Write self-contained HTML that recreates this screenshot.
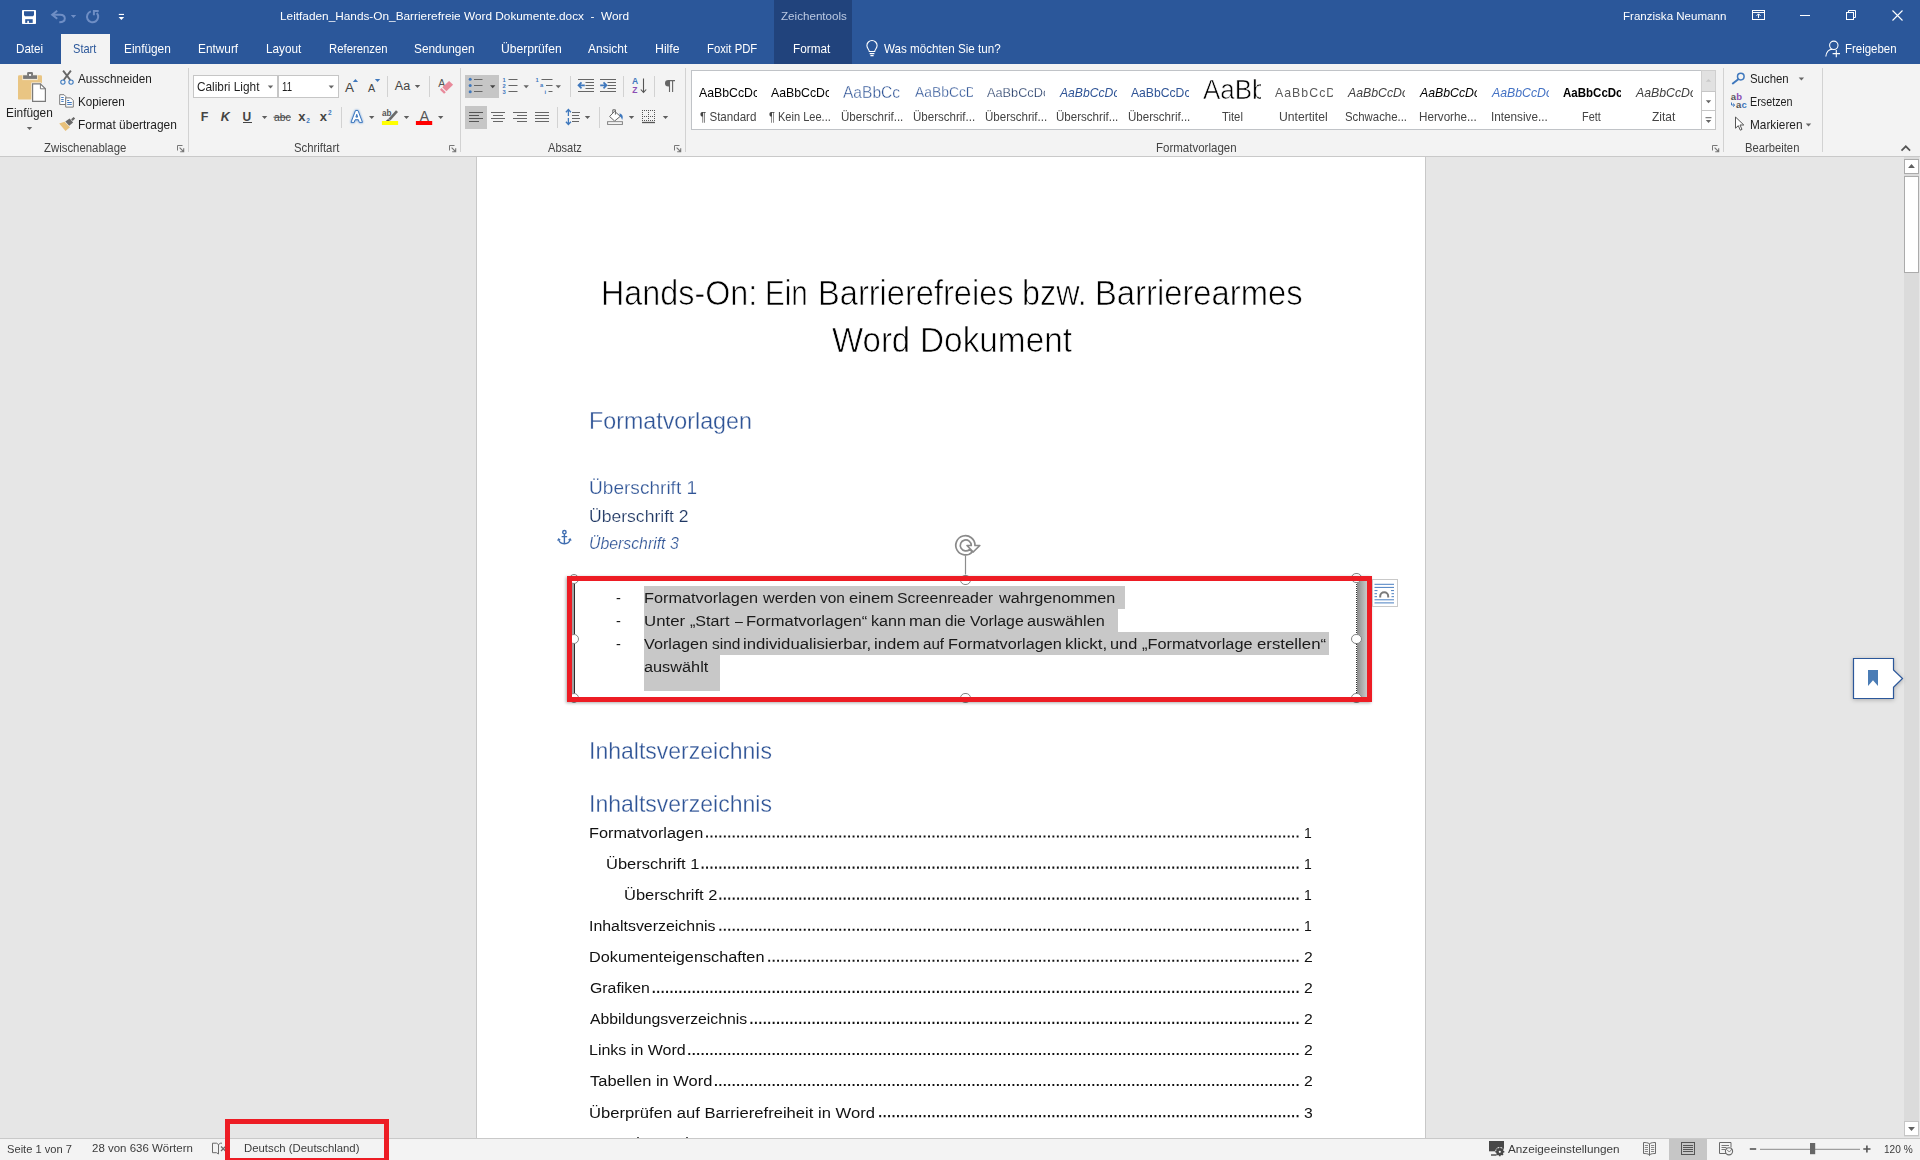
<!DOCTYPE html>
<html lang="de"><head><meta charset="utf-8"><title>Word</title>
<style>
html,body{margin:0;padding:0}
body{width:1920px;height:1160px;overflow:hidden;position:relative;background:#e6e6e6;font-family:"Liberation Sans",sans-serif}
.abs,.t,.clip,.b{position:absolute}
.t{white-space:pre;line-height:1;transform-origin:0 0;font-family:"Liberation Sans",sans-serif}
.clip{overflow:hidden}
.b{box-sizing:border-box}
.sep{position:absolute;width:1px;background:#d2d2d2}
.hl{position:absolute;background:#c6c6c6}
.sel{position:absolute;background:#c8c8c8}
.hd{position:absolute;width:10.400px;height:10.400px;border-radius:50%;background:#fff;border:1.800px solid #858585;box-sizing:border-box}
</style></head><body>
<!-- ===== document area ===== -->
<div class="b" style="left:476px;top:157px;width:950px;height:981px;background:#fff;border-left:1px solid #c8c8c8;border-right:1px solid #c8c8c8"></div>
<!-- selection highlight -->
<div class="sel" style="left:644px;top:586px;width:481px;height:23px"></div>
<div class="sel" style="left:644px;top:609px;width:474px;height:23px"></div>
<div class="sel" style="left:644px;top:632px;width:685px;height:23px"></div>
<div class="sel" style="left:644px;top:655px;width:76px;height:36px"></div>
<div class="abs" style="left:637px;top:1137px;width:2px;height:1px;background:#555"></div><div class="abs" style="left:686px;top:1137px;width:2px;height:1px;background:#555"></div>
<!-- textbox frame -->
<div class="abs" style="left:572px;top:579px;width:2px;height:120px;background:#a2a2a2"></div><div class="abs" style="left:574px;top:579px;width:1px;height:120px;background:#2a2a2a"></div>
<div class="abs" style="left:1357px;top:581px;width:10px;height:117px;background:linear-gradient(to right,#8c8c8c,#a9a9a9 45%,#c9c9c9)"></div>
<div class="abs" style="left:1356px;top:579px;width:0;height:120px;border-left:1px dotted #333"></div>
<svg class="abs" style="left:0;top:0" width="1920" height="1160"><g stroke="#111" stroke-width="2.1" stroke-dasharray="1.9 2.54"><line x1="706.08" y1="836.55" x2="1298.50" y2="836.55"/><line x1="701.64" y1="867.61" x2="1298.50" y2="867.61"/><line x1="719.40" y1="898.67" x2="1298.50" y2="898.67"/><line x1="719.40" y1="929.73" x2="1298.50" y2="929.73"/><line x1="768.24" y1="960.79" x2="1298.50" y2="960.79"/><line x1="652.80" y1="991.85" x2="1298.50" y2="991.85"/><line x1="750.48" y1="1022.91" x2="1298.50" y2="1022.91"/><line x1="688.32" y1="1053.97" x2="1298.50" y2="1053.97"/><line x1="714.96" y1="1085.03" x2="1298.50" y2="1085.03"/><line x1="879.24" y1="1116.09" x2="1298.50" y2="1116.09"/></g></svg>
<!-- ===== scrollbar ===== -->
<div class="abs" style="left:1904px;top:157px;width:15px;height:980px;background:#dbdbdb"></div>
<div class="b" style="left:1904px;top:159px;width:15px;height:15px;background:#fff;border:1px solid #ababab"></div>
<div class="b" style="left:1904px;top:176px;width:15px;height:97px;background:#fff;border:1px solid #ababab"></div>
<div class="b" style="left:1904px;top:1121px;width:15px;height:15px;background:#fff;border:1px solid #c6c6c6"></div>
<svg class="abs" style="left:1904px;top:157px" width="16" height="981"><path d="M4.100 11 L7.500 7 L10.900 11Z M4.100 970 L7.500 974 L10.900 970Z" fill="#606060"/></svg>
<!-- ===== title bar ===== -->
<div class="abs" style="left:0;top:0;width:1920px;height:64px;background:#2b579a"></div>
<div class="abs" style="left:774px;top:0;width:78px;height:64px;background:#21437c"></div>
<div class="abs" style="left:61px;top:34px;width:49px;height:30px;background:#f3f3f3"></div>
<!-- ===== ribbon ===== -->
<div class="abs" style="left:0;top:64px;width:1920px;height:92px;background:#f3f3f3"></div>
<div class="abs" style="left:0;top:156px;width:1920px;height:1px;background:#c9c9c9"></div>
<!-- ===== status bar ===== -->
<div class="abs" style="left:0;top:1138px;width:1920px;height:1px;background:#c9c9c9"></div>
<div class="abs" style="left:0;top:1139px;width:1920px;height:21px;background:#f3f3f3"></div>
<div class="abs" style="left:1669px;top:1139px;width:38px;height:21px;background:#c6c6c6"></div>
<!-- ribbon shapes -->
<div class="sep" style="left:188px;top:68px;height:84px"></div>
<div class="sep" style="left:460px;top:68px;height:84px"></div>
<div class="sep" style="left:685px;top:68px;height:84px"></div>
<div class="sep" style="left:1723px;top:68px;height:84px"></div>
<div class="sep" style="left:1822px;top:68px;height:84px"></div>
<div class="sep" style="left:387px;top:76px;height:21px"></div>
<div class="sep" style="left:429px;top:76px;height:21px"></div>
<div class="sep" style="left:341px;top:107px;height:21px"></div>
<div class="sep" style="left:570px;top:76px;height:21px"></div>
<div class="sep" style="left:623px;top:76px;height:21px"></div>
<div class="sep" style="left:654px;top:76px;height:21px"></div>
<div class="sep" style="left:557px;top:107px;height:21px"></div>
<div class="sep" style="left:599px;top:107px;height:21px"></div>
<div class="b" style="left:193px;top:75px;width:85px;height:23px;background:#fff;border:1px solid #c6c6c6"></div>
<div class="b" style="left:278px;top:75px;width:61px;height:23px;background:#fff;border:1px solid #c6c6c6"></div>
<div class="hl" style="left:465px;top:75px;width:34px;height:23px"></div>
<div class="hl" style="left:465px;top:106px;width:22px;height:23px"></div>
<div class="b" style="left:691px;top:70px;width:1011px;height:60px;background:#fff;border:1px solid #c0c3c7"></div>
<div class="b" style="left:1701px;top:70px;width:15px;height:22px;background:#e1e1e1;border:1px solid #cfcfcf"></div>
<div class="b" style="left:1701px;top:91px;width:15px;height:20px;background:#fff;border:1px solid #c6c6c6"></div>
<div class="b" style="left:1701px;top:110px;width:15px;height:20px;background:#fff;border:1px solid #c6c6c6"></div>

<span class="t" style="left:279.50px;top:11.00px;font-size:11.80px;color:#ffffff;transform:scaleX(1.0019);">Leitfaden_Hands-On_Barrierefreie Word Dokumente.docx  -  Word</span>
<span class="t" style="left:780.80px;top:11.00px;font-size:11.80px;color:#bccae3;transform:scaleX(0.9852);">Zeichentools</span>
<span class="t" style="left:1622.50px;top:11.00px;font-size:11.80px;color:#ffffff;transform:scaleX(0.9790);">Franziska Neumann</span>
<span class="t" style="left:16.30px;top:44.00px;font-size:11.90px;color:#ffffff;transform:scaleX(0.9773);">Datei</span>
<span class="t" style="left:73.00px;top:44.00px;font-size:11.90px;color:#2b579a;transform:scaleX(0.9300);">Start</span>
<span class="t" style="left:124.40px;top:44.00px;font-size:11.90px;color:#ffffff;transform:scaleX(0.9972);">Einfügen</span>
<span class="t" style="left:198.20px;top:44.00px;font-size:11.90px;color:#ffffff;transform:scaleX(0.9949);">Entwurf</span>
<span class="t" style="left:266.00px;top:44.00px;font-size:11.90px;color:#ffffff;transform:scaleX(0.9891);">Layout</span>
<span class="t" style="left:329.00px;top:44.00px;font-size:11.90px;color:#ffffff;transform:scaleX(0.9530);">Referenzen</span>
<span class="t" style="left:414.00px;top:44.00px;font-size:11.90px;color:#ffffff;transform:scaleX(0.9963);">Sendungen</span>
<span class="t" style="left:501.00px;top:44.00px;font-size:11.90px;color:#ffffff;transform:scaleX(1.0191);">Überprüfen</span>
<span class="t" style="left:588.00px;top:44.00px;font-size:11.90px;color:#ffffff;transform:scaleX(1.0078);">Ansicht</span>
<span class="t" style="left:655.00px;top:44.00px;font-size:11.90px;color:#ffffff;transform:scaleX(1.0342);">Hilfe</span>
<span class="t" style="left:707.00px;top:44.00px;font-size:11.90px;color:#ffffff;transform:scaleX(0.9508);">Foxit PDF</span>
<span class="t" style="left:793.00px;top:44.00px;font-size:11.90px;color:#ffffff;transform:scaleX(0.9908);">Format</span>
<span class="t" style="left:884.00px;top:44.00px;font-size:11.90px;color:#ffffff;transform:scaleX(0.9785);">Was möchten Sie tun?</span>
<span class="t" style="left:1844.50px;top:44.00px;font-size:11.90px;color:#ffffff;transform:scaleX(0.9635);">Freigeben</span>
<span class="t" style="left:6.20px;top:108.00px;font-size:11.90px;color:#1e1e1e;transform:scaleX(0.9972);">Einfügen</span>
<span class="t" style="left:78.30px;top:74.00px;font-size:11.90px;color:#1e1e1e;transform:scaleX(0.9867);">Ausschneiden</span>
<span class="t" style="left:78.30px;top:97.00px;font-size:11.90px;color:#1e1e1e;transform:scaleX(0.9833);">Kopieren</span>
<span class="t" style="left:78.30px;top:120.00px;font-size:11.90px;color:#1e1e1e;transform:scaleX(1.0035);">Format übertragen</span>
<span class="t" style="left:43.90px;top:143.00px;font-size:11.90px;color:#444444;transform:scaleX(0.9581);">Zwischenablage</span>
<span class="t" style="left:293.60px;top:143.00px;font-size:11.90px;color:#444444;transform:scaleX(0.9530);">Schriftart</span>
<span class="t" style="left:548.30px;top:143.00px;font-size:11.90px;color:#444444;transform:scaleX(0.9312);">Absatz</span>
<span class="t" style="left:1156.40px;top:143.00px;font-size:11.90px;color:#444444;transform:scaleX(0.9679);">Formatvorlagen</span>
<span class="t" style="left:1744.80px;top:143.00px;font-size:11.90px;color:#444444;transform:scaleX(0.9455);">Bearbeiten</span>
<span class="t" style="left:196.70px;top:82.00px;font-size:11.90px;color:#1e1e1e;transform:scaleX(0.9940);">Calibri Light</span>
<span class="t" style="left:281.90px;top:82.00px;font-size:11.90px;color:#1e1e1e;transform:scaleX(0.8091);">11</span>
<span class="t" style="left:1750.40px;top:74.00px;font-size:11.90px;color:#1e1e1e;transform:scaleX(0.9593);">Suchen</span>
<span class="t" style="left:1750.40px;top:97.00px;font-size:11.90px;color:#1e1e1e;transform:scaleX(0.9069);">Ersetzen</span>
<span class="t" style="left:1750.40px;top:120.00px;font-size:11.90px;color:#1e1e1e;transform:scaleX(0.9933);">Markieren</span>
<span class="t" style="left:7.30px;top:1143.00px;font-size:11.60px;color:#3c3c3c;transform:scaleX(0.9609);">Seite 1 von 7</span>
<span class="t" style="left:92.30px;top:1142.00px;font-size:11.60px;color:#3c3c3c;transform:scaleX(0.9904);">28 von 636 Wörtern</span>
<span class="t" style="left:244.20px;top:1142.00px;font-size:11.60px;color:#3c3c3c;transform:scaleX(0.9791);">Deutsch (Deutschland)</span>
<span class="t" style="left:1507.50px;top:1143.00px;font-size:11.60px;color:#3c3c3c;transform:scaleX(1.0120);">Anzeigeeinstellungen</span>
<span class="t" style="left:1883.50px;top:1143.00px;font-size:11.60px;color:#3c3c3c;transform:scaleX(0.8721);">120 %</span>
<span class="t" style="left:700.00px;top:112.00px;font-size:11.90px;color:#444444;transform:scaleX(0.9732);">¶ Standard</span>
<span class="t" style="left:769.10px;top:112.00px;font-size:11.90px;color:#444444;transform:scaleX(0.9285);">¶ Kein Lee...</span>
<span class="t" style="left:840.50px;top:112.00px;font-size:11.90px;color:#444444;transform:scaleX(0.9720);">Überschrif...</span>
<span class="t" style="left:912.60px;top:112.00px;font-size:11.90px;color:#444444;transform:scaleX(0.9704);">Überschrif...</span>
<span class="t" style="left:984.60px;top:112.00px;font-size:11.90px;color:#444444;transform:scaleX(0.9704);">Überschrif...</span>
<span class="t" style="left:1056.30px;top:112.00px;font-size:11.90px;color:#444444;transform:scaleX(0.9720);">Überschrif...</span>
<span class="t" style="left:1128.40px;top:112.00px;font-size:11.90px;color:#444444;transform:scaleX(0.9720);">Überschrif...</span>
<span class="t" style="left:1221.90px;top:112.00px;font-size:11.90px;color:#444444;transform:scaleX(0.9495);">Titel</span>
<span class="t" style="left:1279.00px;top:112.00px;font-size:11.90px;color:#444444;transform:scaleX(1.0226);">Untertitel</span>
<span class="t" style="left:1345.00px;top:112.00px;font-size:11.90px;color:#444444;transform:scaleX(0.9571);">Schwache...</span>
<span class="t" style="left:1419.30px;top:112.00px;font-size:11.90px;color:#444444;transform:scaleX(0.9810);">Hervorhe...</span>
<span class="t" style="left:1491.31px;top:112.00px;font-size:11.90px;color:#444444;transform:scaleX(0.9858);">Intensive...</span>
<span class="t" style="left:1582.30px;top:112.00px;font-size:11.90px;color:#444444;transform:scaleX(0.9160);">Fett</span>
<span class="t" style="left:1651.70px;top:112.00px;font-size:11.90px;color:#444444;transform:scaleX(1.0075);">Zitat</span>
<div class="clip" style="left:698.00px;width:59.30px;top:83.00px;height:24.84px"><span class="t" style="left:0.80px;top:4px;font-size:12.95px;color:#000;transform:scaleX(0.9500);">AaBbCcDc</span></div>
<div class="clip" style="left:770.00px;width:59.30px;top:83.00px;height:24.84px"><span class="t" style="left:0.80px;top:4px;font-size:12.95px;color:#000;transform:scaleX(0.9500);">AaBbCcDc</span></div>
<div class="clip" style="left:842.00px;width:59.30px;top:80.00px;height:30.48px"><span class="t" style="left:0.80px;top:4px;font-size:17.29px;color:#2f5496;transform:scaleX(0.9000);-webkit-text-stroke:0.35px #fff;">AaBbCcDc</span></div>
<div class="clip" style="left:914.00px;width:59.30px;top:80.00px;height:27.78px"><span class="t" style="left:0.80px;top:4px;font-size:15.22px;color:#2f5496;transform:scaleX(0.9100);-webkit-text-stroke:0.3px #fff;">AaBbCcDc</span></div>
<div class="clip" style="left:986.00px;width:59.30px;top:82.00px;height:25.61px"><span class="t" style="left:0.80px;top:4px;font-size:13.55px;color:#1f3763;transform:scaleX(0.9400);-webkit-text-stroke:0.25px #fff;">AaBbCcDc</span></div>
<div class="clip" style="left:1058.00px;width:59.30px;top:83.00px;height:24.84px"><span class="t" style="left:1.74px;top:4px;font-size:12.95px;color:#2f5496;transform:scaleX(0.9400);font-style:italic;">AaBbCcDc</span></div>
<div class="clip" style="left:1130.00px;width:59.30px;top:83.00px;height:24.84px"><span class="t" style="left:0.80px;top:4px;font-size:12.95px;color:#2f5496;transform:scaleX(0.9400);">AaBbCcDc</span></div>
<div class="clip" style="left:1202.00px;width:59.30px;top:72.00px;height:43.54px"><span class="t" style="left:0.80px;top:4px;font-size:27.34px;color:#000;transform:scaleX(0.9500);-webkit-text-stroke:0.6px #fff;">AaBbCc</span></div>
<div class="clip" style="left:1274.00px;width:59.30px;top:83.00px;height:24.84px"><span class="t" style="left:0.80px;top:4px;font-size:12.95px;color:#5a5a5a;transform:scaleX(0.9500);letter-spacing:1.1px;">AaBbCcDd</span></div>
<div class="clip" style="left:1346.00px;width:59.30px;top:83.00px;height:24.84px"><span class="t" style="left:1.75px;top:4px;font-size:12.95px;color:#404040;transform:scaleX(0.9500);font-style:italic;">AaBbCcDc</span></div>
<div class="clip" style="left:1418.00px;width:59.30px;top:83.00px;height:24.84px"><span class="t" style="left:1.75px;top:4px;font-size:12.95px;color:#000;transform:scaleX(0.9500);font-style:italic;">AaBbCcDc</span></div>
<div class="clip" style="left:1490.00px;width:59.30px;top:83.00px;height:24.84px"><span class="t" style="left:1.75px;top:4px;font-size:12.95px;color:#4472c4;transform:scaleX(0.9500);font-style:italic;">AaBbCcDc</span></div>
<div class="clip" style="left:1562.00px;width:59.30px;top:83.00px;height:24.84px"><span class="t" style="left:0.80px;top:4px;font-size:12.95px;color:#000;transform:scaleX(0.8900);font-weight:bold;">AaBbCcDc</span></div>
<div class="clip" style="left:1634.00px;width:59.30px;top:83.00px;height:24.84px"><span class="t" style="left:1.75px;top:4px;font-size:12.95px;color:#404040;transform:scaleX(0.9500);font-style:italic;">AaBbCcDc</span></div>
<span class="t" style="left:589.29px;top:410.00px;font-size:23.02px;color:#2f5496;transform:scaleX(1.0108);-webkit-text-stroke:0.3px #fff;">Formatvorlagen</span>
<span class="t" style="left:589.28px;top:479.00px;font-size:18.72px;color:#2f5496;transform:scaleX(1.0199);-webkit-text-stroke:0.25px #fff;">Überschrift 1</span>
<span class="t" style="left:589.28px;top:508.00px;font-size:17.23px;color:#1f3763;transform:scaleX(1.0205);-webkit-text-stroke:0.2px #fff;">Überschrift 2</span>
<span class="t" style="left:589.30px;top:536.00px;font-size:15.82px;color:#2f5496;transform:scaleX(1.0007);font-style:italic;-webkit-text-stroke:0.2px #fff;">Überschrift 3</span>
<span class="t" style="left:600.65px;top:276.00px;font-size:34.88px;color:#000;transform:scaleX(0.9265);-webkit-text-stroke:0.7px #fff;">Hands-On:</span>
<span class="t" style="left:764.90px;top:276.00px;font-size:34.88px;color:#000;transform:scaleX(0.8488);-webkit-text-stroke:0.7px #fff;">Ein</span>
<span class="t" style="left:817.53px;top:276.00px;font-size:34.88px;color:#000;transform:scaleX(0.9348);-webkit-text-stroke:0.7px #fff;">Barrierefreies</span>
<span class="t" style="left:1022.24px;top:276.00px;font-size:34.88px;color:#000;transform:scaleX(0.9279);-webkit-text-stroke:0.7px #fff;">bzw.</span>
<span class="t" style="left:1095.02px;top:276.00px;font-size:34.88px;color:#000;transform:scaleX(0.9396);-webkit-text-stroke:0.7px #fff;">Barrierearmes</span>
<span class="t" style="left:831.60px;top:323.00px;font-size:34.88px;color:#000;transform:scaleX(0.9459);-webkit-text-stroke:0.7px #fff;">Word</span>
<span class="t" style="left:920.29px;top:323.00px;font-size:34.88px;color:#000;transform:scaleX(0.9564);-webkit-text-stroke:0.7px #fff;">Dokument</span>
<span class="t" style="left:643.85px;top:590.00px;font-size:15.54px;color:#1a1a1a;transform:scaleX(1.0483);">Formatvorlagen</span>
<span class="t" style="left:762.84px;top:590.00px;font-size:15.54px;color:#1a1a1a;transform:scaleX(1.0448);">werden</span>
<span class="t" style="left:819.50px;top:590.00px;font-size:15.54px;color:#1a1a1a;transform:scaleX(0.9958);">von</span>
<span class="t" style="left:848.70px;top:590.00px;font-size:15.54px;color:#1a1a1a;transform:scaleX(1.0589);">einem</span>
<span class="t" style="left:897.40px;top:590.00px;font-size:15.54px;color:#1a1a1a;transform:scaleX(1.0199);">Screenreader</span>
<span class="t" style="left:998.84px;top:590.00px;font-size:15.54px;color:#1a1a1a;transform:scaleX(1.0436);">wahrgenommen</span>
<span class="t" style="left:643.82px;top:613.00px;font-size:15.54px;color:#1a1a1a;transform:scaleX(1.0813);">Unter</span>
<span class="t" style="left:690.10px;top:613.00px;font-size:15.54px;color:#1a1a1a;transform:scaleX(1.0374);">„Start</span>
<span class="t" style="left:734.80px;top:613.00px;font-size:15.54px;color:#1a1a1a;transform:scaleX(0.9111);">–</span>
<span class="t" style="left:746.44px;top:613.00px;font-size:15.54px;color:#1a1a1a;transform:scaleX(1.0642);">Formatvorlagen“</span>
<span class="t" style="left:870.86px;top:613.00px;font-size:15.54px;color:#1a1a1a;transform:scaleX(1.0393);">kann</span>
<span class="t" style="left:908.73px;top:613.00px;font-size:15.54px;color:#1a1a1a;transform:scaleX(1.0709);">man</span>
<span class="t" style="left:945.30px;top:613.00px;font-size:15.54px;color:#1a1a1a;transform:scaleX(1.0006);">die</span>
<span class="t" style="left:969.60px;top:613.00px;font-size:15.54px;color:#1a1a1a;transform:scaleX(1.0204);">Vorlage</span>
<span class="t" style="left:1027.30px;top:613.00px;font-size:15.54px;color:#1a1a1a;transform:scaleX(1.0473);">auswählen</span>
<span class="t" style="left:644.00px;top:636.00px;font-size:15.54px;color:#1a1a1a;transform:scaleX(1.0449);">Vorlagen</span>
<span class="t" style="left:711.60px;top:636.00px;font-size:15.54px;color:#1a1a1a;transform:scaleX(0.9945);">sind</span>
<span class="t" style="left:743.22px;top:636.00px;font-size:15.54px;color:#1a1a1a;transform:scaleX(1.0760);">individualisierbar,</span>
<span class="t" style="left:873.72px;top:636.00px;font-size:15.54px;color:#1a1a1a;transform:scaleX(1.0777);">indem</span>
<span class="t" style="left:923.10px;top:636.00px;font-size:15.54px;color:#1a1a1a;transform:scaleX(0.9742);">auf</span>
<span class="t" style="left:947.95px;top:636.00px;font-size:15.54px;color:#1a1a1a;transform:scaleX(1.0474);">Formatvorlagen</span>
<span class="t" style="left:1065.02px;top:636.00px;font-size:15.54px;color:#1a1a1a;transform:scaleX(1.0845);">klickt,</span>
<span class="t" style="left:1109.75px;top:636.00px;font-size:15.54px;color:#1a1a1a;transform:scaleX(1.0504);">und</span>
<span class="t" style="left:1142.10px;top:636.00px;font-size:15.54px;color:#1a1a1a;transform:scaleX(1.0501);">„Formatvorlage</span>
<span class="t" style="left:1256.60px;top:636.00px;font-size:15.54px;color:#1a1a1a;transform:scaleX(1.0816);">erstellen“</span>
<span class="t" style="left:644.30px;top:659.00px;font-size:15.54px;color:#1a1a1a;transform:scaleX(1.0487);">auswählt</span>
<span class="t" style="left:615.50px;top:590.00px;font-size:15.54px;color:#1a1a1a;transform:scaleX(0.9400);">-</span>
<span class="t" style="left:615.50px;top:613.00px;font-size:15.54px;color:#1a1a1a;transform:scaleX(0.9400);">-</span>
<span class="t" style="left:615.50px;top:636.00px;font-size:15.54px;color:#1a1a1a;transform:scaleX(0.9400);">-</span>
<span class="t" style="left:588.80px;top:740.00px;font-size:23.02px;color:#2f5496;transform:scaleX(0.9999);-webkit-text-stroke:0.3px #fff;">Inhaltsverzeichnis</span>
<span class="t" style="left:588.80px;top:793.00px;font-size:23.02px;color:#2f5496;transform:scaleX(0.9999);-webkit-text-stroke:0.3px #fff;">Inhaltsverzeichnis</span>
<span class="t" style="left:588.95px;top:825.00px;font-size:15.54px;color:#111;transform:scaleX(1.0502);">Formatvorlagen</span>
<span class="t" style="left:1304.30px;top:825.00px;font-size:15.54px;color:#111;transform:scaleX(0.9000);">1</span>
<span class="t" style="left:606.44px;top:856.00px;font-size:15.54px;color:#111;transform:scaleX(1.0613);">Überschrift 1</span>
<span class="t" style="left:1304.30px;top:856.00px;font-size:15.54px;color:#111;transform:scaleX(0.9000);">1</span>
<span class="t" style="left:623.94px;top:887.00px;font-size:15.54px;color:#111;transform:scaleX(1.0613);">Überschrift 2</span>
<span class="t" style="left:1304.30px;top:887.00px;font-size:15.54px;color:#111;transform:scaleX(0.9000);">1</span>
<span class="t" style="left:589.28px;top:918.00px;font-size:15.54px;color:#111;transform:scaleX(1.0246);">Inhaltsverzeichnis</span>
<span class="t" style="left:1304.30px;top:918.00px;font-size:15.54px;color:#111;transform:scaleX(0.9000);">1</span>
<span class="t" style="left:589.25px;top:949.00px;font-size:15.54px;color:#111;transform:scaleX(1.0473);">Dokumenteigenschaften</span>
<span class="t" style="left:1304.20px;top:949.00px;font-size:15.54px;color:#111;transform:scaleX(1.0125);">2</span>
<span class="t" style="left:590.30px;top:980.00px;font-size:15.54px;color:#111;transform:scaleX(1.0196);">Grafiken</span>
<span class="t" style="left:1304.20px;top:980.00px;font-size:15.54px;color:#111;transform:scaleX(1.0125);">2</span>
<span class="t" style="left:590.00px;top:1011.00px;font-size:15.54px;color:#111;transform:scaleX(1.0176);">Abbildungsverzeichnis</span>
<span class="t" style="left:1304.20px;top:1011.00px;font-size:15.54px;color:#111;transform:scaleX(1.0125);">2</span>
<span class="t" style="left:589.27px;top:1042.00px;font-size:15.54px;color:#111;transform:scaleX(1.0308);">Links in Word</span>
<span class="t" style="left:1304.20px;top:1042.00px;font-size:15.54px;color:#111;transform:scaleX(1.0125);">2</span>
<span class="t" style="left:589.50px;top:1073.00px;font-size:15.54px;color:#111;transform:scaleX(1.0605);">Tabellen in Word</span>
<span class="t" style="left:1304.20px;top:1073.00px;font-size:15.54px;color:#111;transform:scaleX(1.0125);">2</span>
<span class="t" style="left:589.23px;top:1105.00px;font-size:15.54px;color:#111;transform:scaleX(1.0697);">Überprüfen auf Barrierefreiheit in Word</span>
<span class="t" style="left:1304.20px;top:1105.00px;font-size:15.54px;color:#111;transform:scaleX(1.0125);">3</span>
<svg class="abs" style="left:0;top:0" width="1920" height="160" viewBox="0 0 1920 160">

<!-- QAT -->
<g>
<rect x="22" y="9.900" width="14" height="14.100" rx="0.700" fill="#fff"/>
<path d="M24 11.300h10v3.800l-1 1.200h-8l-1-1.200z" fill="#2b579a"/>
<rect x="25.200" y="19.200" width="7.500" height="3.700" fill="#2b579a"/>
<rect x="27.300" y="20.800" width="1.600" height="2.200" fill="#fff"/>
</g>
<g fill="none" stroke="#6f8ec5" stroke-width="2" stroke-linecap="butt">
<path d="M57.200 10.700 L52.200 14.700 L57.200 18.700"/><path d="M52.800 14.700 H60.200 C63.400 14.700 64.800 16.600 64.800 18.400 C64.800 20.800 62.400 22.100 59.300 22.200"/>
<path d="M93.900 15.300 V11 H98.700"/><path d="M90.800 11.400 A5.600 5.600 0 1 0 96.800 13"/>
</g>
<path d="M70.80 15.10h5.4l-2.7 3z" fill="#6f8ec5"/>
<rect x="118.8" y="13.9" width="5.2" height="1.1" fill="#fff"/><path d="M118.6 17h5.6l-2.8 2.9z" fill="#fff"/>
<!-- window controls -->
<g fill="none" stroke="#fff" stroke-width="1">
<rect x="1752.5" y="10.5" width="12" height="9"/><path d="M1752.5 12.5h12M1758.5 18v-4M1756.5 15.8l2-2 2 2"/>
<path d="M1800 15.5h10"/>
<rect x="1846.5" y="12.5" width="7" height="7"/><path d="M1848.5 12.5v-2h7v7h-2"/>
<path d="M1892.5 10.5l10 10M1902.5 10.5l-10 10" stroke-width="1.1"/>
</g>
<!-- lightbulb -->
<g fill="none" stroke="#fff" stroke-width="1.1"><path d="M869.3 51.5 C869.3 49.5 866.9 48.7 866.9 45.6 A5.1 5.1 0 0 1 877.1 45.6 C877.1 48.7 874.7 49.5 874.7 51.5 Z"/><path d="M869.6 53.6h4.8M870.4 55.6h3.2"/></g>
<!-- share -->
<g fill="none" stroke="#fff" stroke-width="1.1"><circle cx="1833.8" cy="45.3" r="4.2"/><path d="M1825.8 56.5c0.6-4.6 3.4-7 6.6-7.2M1832.600 53.600h7.400M1836.300 49.900v7.400"/></g>
<!-- paste -->
<g>
<rect x="18" y="75.3" width="24" height="24.3" rx="1.2" fill="#e9c583"/>
<rect x="22.300" y="74.600" width="15.400" height="5.500" fill="#f1ead9"/><rect x="23.100" y="75.300" width="13.900" height="3.600" fill="#787878"/><rect x="27.100" y="72" width="5.900" height="4" rx="1.200" fill="#787878"/><rect x="29" y="74" width="2.100" height="1.900" fill="#f3f3f3"/>
<path d="M31.400 82.600h9.600l5.600 5.400v14.500h-15.200z" fill="#f3f3f3"/><path d="M32.600 83.800h7.800l5 5v12.600h-12.800z" fill="#fff" stroke="#7a7a7a" stroke-width="1.200"/><path d="M40.400 83.800v5h5" fill="none" stroke="#7a7a7a" stroke-width="1"/>
</g>
<path d="M26.80 127.00h5.4l-2.7 3z" fill="#666"/>
<!-- scissors -->
<g fill="none"><path d="M63.100 70.600L70.300 80M70.900 70.600L63.700 80" stroke="#666" stroke-width="1.900"/><circle cx="62.900" cy="82.100" r="2.150" stroke="#3f7bbf" stroke-width="1.100"/><circle cx="71.050" cy="82.100" r="2.150" stroke="#3f7bbf" stroke-width="1.100"/></g>
<!-- copy -->
<g fill="#fff" stroke="#7a7a7a" stroke-width="1"><path d="M59.700 94.700h4.300l1.800 1.800v8h-6.100z"/><path d="M65.700 97.900h5l2.600 2.600v6.600h-7.600z"/></g>
<path d="M61.200 97.500h2.500M61.200 99.500h2.500M61.200 101.400h2.500M67.200 102.500h4.600M67.200 104.400h4.600M67.200 100.500h2" stroke="#3f78bd" stroke-width="1" fill="none"/>
<!-- format painter -->
<g><path d="M71.100 119.300l2.500-2.400 1.500 1.600-2.500 2.400z" fill="#666"/><path d="M65.300 121.500l4.300-3 3.500 4-3.900 3.300z" fill="#6a6a6a"/><path d="M59.200 123.400l5.300-1.600 5.500 5.400-4.500 3.700z" fill="#e9c27b"/></g>
<!-- launchers -->
<g transform="translate(177.0 145.0)"><path d="M0.5 5.5V0.5H5.5" fill="none" stroke="#777" stroke-width="1"/><path d="M2.6 2.6L6.5 6.5M6.7 3.2V6.7H3.2" fill="none" stroke="#777" stroke-width="1.1"/></g><g transform="translate(449.0 145.0)"><path d="M0.5 5.5V0.5H5.5" fill="none" stroke="#777" stroke-width="1"/><path d="M2.6 2.6L6.5 6.5M6.7 3.2V6.7H3.2" fill="none" stroke="#777" stroke-width="1.1"/></g><g transform="translate(674.0 145.0)"><path d="M0.5 5.5V0.5H5.5" fill="none" stroke="#777" stroke-width="1"/><path d="M2.6 2.6L6.5 6.5M6.7 3.2V6.7H3.2" fill="none" stroke="#777" stroke-width="1.1"/></g><g transform="translate(1712.0 145.0)"><path d="M0.5 5.5V0.5H5.5" fill="none" stroke="#777" stroke-width="1"/><path d="M2.6 2.6L6.5 6.5M6.7 3.2V6.7H3.2" fill="none" stroke="#777" stroke-width="1.1"/></g>
<!-- font box arrows -->
<path d="M267.80 85.50h5.4l-2.7 3z" fill="#666"/><path d="M328.60 85.50h5.4l-2.7 3z" fill="#666"/>
<!-- grow / shrink -->
<g font-family="Liberation Sans" fill="#444"><text x="345" y="92" font-size="13.500">A</text><text x="367.900" y="92" font-size="10.800">A</text><text x="394.800" y="90.100" font-size="12.300" textLength="15.400" lengthAdjust="spacingAndGlyphs">Aa</text></g>
<path d="M352.800 81.900l2.650-3 2.650 3z" fill="#3f78bd"/><path d="M374.900 79.100h5.300l-2.650 3z" fill="#3f78bd"/>
<path d="M414.80 85.00h5.4l-2.7 3z" fill="#5e5e5e"/>
<!-- clear formatting -->
<g><text x="438.300" y="86.900" font-family="Liberation Sans" font-size="11.300" fill="#555" textLength="7" lengthAdjust="spacingAndGlyphs">A</text><path d="M449.100 80.900l4 3.800-6.700 6.500-4.100-3.900z" fill="#e8899a"/><path d="M441.500 88.100l4.300 4.100-1.700 1.500-4.100-3.900z" fill="#e8899a"/></g>
<!-- F K U abc x2 x2 -->
<g font-family="Liberation Sans" fill="#444" font-size="12.500">
<text x="200.800" y="120.700" font-weight="bold">F</text>
<text x="220.800" y="120.700" font-weight="bold" font-style="italic">K</text>
<text x="242.600" y="120.700" font-weight="bold" font-size="12">U</text>
<text x="274" y="120.700" font-size="11.500" textLength="16.500" lengthAdjust="spacingAndGlyphs">abc</text>
<text x="298.300" y="120.700" font-weight="bold" font-size="13">x</text>
<text x="319.700" y="120.700" font-weight="bold" font-size="13">x</text>
</g>
<path d="M243 122.500h9M273.500 117.200h17.500" stroke="#444" stroke-width="1"/>
<g font-family="Liberation Sans" fill="#3f78bd" font-size="6.500" font-weight="bold"><text x="306.300" y="123">2</text><text x="328" y="115">2</text></g>
<path d="M261.90 116.00h5.4l-2.7 3z" fill="#5e5e5e"/>
<!-- text effects A -->
<path d="M351 122.400L355.500 110.500H358L362.500 122.400H359.300L358.400 119.700H355.100L354.200 122.400ZM355.900 117.100H357.600L356.750 114.300Z" fill="#fff" stroke="#3f78bd" stroke-width="1" stroke-linejoin="round" style="filter:drop-shadow(0 0 1.200px #5b93d6)"/>
<path d="M369.00 116.00h5.4l-2.7 3z" fill="#5e5e5e"/>
<!-- highlight -->
<text x="382" y="116" font-family="Liberation Sans" font-size="9.500" fill="#555" font-weight="bold" textLength="9.500" lengthAdjust="spacingAndGlyphs">ab</text>
<path d="M388.400 118.700l7.600-8.400 2 1.800-7.600 8.400z" fill="#6a6a6a"/><path d="M385.800 121l2.300-2.100 2 1.800-1.400 .3z" fill="#555"/>
<rect x="381.900" y="121" width="16.200" height="4" fill="#ffff00"/>
<path d="M403.80 116.00h5.4l-2.7 3z" fill="#5e5e5e"/>
<!-- font color -->
<text x="419.700" y="120.900" font-family="Liberation Sans" font-size="14" fill="#555" textLength="9.300" lengthAdjust="spacingAndGlyphs">A</text>
<rect x="415.900" y="121" width="16.300" height="4" fill="#ff0000"/>
<path d="M438.00 116.00h5.4l-2.7 3z" fill="#5e5e5e"/>
<!-- bullets -->
<g fill="#3f78bd"><circle cx="470.200" cy="79.300" r="1.500"/><circle cx="470.200" cy="85.500" r="1.500"/><circle cx="470.200" cy="91.700" r="1.500"/></g>
<path d="M474 79.500h8.500M474 85.500h8.500M474 91.500h8.500" stroke="#666" stroke-width="1"/>
<path d="M490.00 85.30h5.4l-2.7 3z" fill="#444"/>
<!-- numbered -->
<g font-family="Liberation Sans" fill="#3f78bd" font-size="5.800" font-weight="bold"><text x="502.500" y="81.800">1</text><text x="502.500" y="87.900">2</text><text x="502.500" y="94">3</text></g>
<path d="M508.500 79.500h9M508.500 85.500h9M508.500 91.500h9" stroke="#666" stroke-width="1"/>
<path d="M523.50 85.30h5.4l-2.7 3z" fill="#666"/>
<!-- multilevel -->
<g font-family="Liberation Sans" fill="#3f78bd" font-size="5.800" font-weight="bold"><text x="535.500" y="81.800">1</text><text x="540" y="87.300">a</text><text x="544.500" y="93.800">i</text></g>
<path d="M541.500 79.500h11M546 85.500h6.500M548.500 91.500h4" stroke="#666" stroke-width="1"/>
<path d="M555.60 85.30h5.4l-2.7 3z" fill="#666"/>
<!-- outdent / indent -->
<path d="M578 79.500h16M585.500 82.500h8.500M585.500 85.500h8.500M585.500 88.500h8.500M578 91.500h16" stroke="#666" stroke-width="1"/>
<path d="M584.800 85.300h-5.800M581.500 82.300l-3 3 3 3" stroke="#3f78bd" stroke-width="1.700" fill="none"/>
<path d="M600 79.500h16M607.500 82.500h8.500M607.500 85.500h8.500M607.500 88.500h8.500M600 91.500h16" stroke="#666" stroke-width="1"/>
<path d="M600.200 85.300h5.800M603.500 82.300l3 3-3 3" stroke="#3f78bd" stroke-width="1.700" fill="none"/>
<!-- sort -->
<g font-family="Liberation Sans" font-size="8.500" font-weight="bold"><text x="632" y="84.300" fill="#3f78bd">A</text><text x="632.300" y="92.800" fill="#8b4fb3">Z</text></g>
<path d="M643.500 78.500v13.500M640.800 89.500l2.700 2.900 2.700-2.900" stroke="#555" stroke-width="1.100" fill="none"/>
<!-- pilcrow -->
<path d="M668.500 80.600h6.500M669.500 80.200v11.700M672.600 80.200v11.700" stroke="#666" stroke-width="1.100" fill="none"/><path d="M670 80h-1.700a3.300 3.300 0 0 0 0 6.600h1.700z" fill="#666"/>
<!-- align -->
<path d="M469 112.500h14M469 115.500h10M469 118.500h14M469 121.500h10" stroke="#555" stroke-width="1.100"/>
<path d="M491 112.500h14M493 115.500h10M491 118.500h14M493 121.500h10" stroke="#666" stroke-width="1.100"/>
<path d="M513 112.500h14M517 115.500h10M513 118.500h14M517 121.500h10" stroke="#666" stroke-width="1.100"/>
<path d="M535 112.500h14M535 115.500h14M535 118.500h14M535 121.500h14" stroke="#666" stroke-width="1.100"/>
<!-- line spacing -->
<path d="M572 112.500h8M572 115.500h7M572 118.500h8M572 121.500h7" stroke="#666" stroke-width="1.100"/>
<path d="M568.400 109.500v6.500M568.400 118v6.500M565.900 112.200l2.500-2.700 2.500 2.700M565.900 121.800l2.500 2.700 2.500-2.700" stroke="#3f78bd" stroke-width="1.300" fill="none"/>
<path d="M584.80 116.00h5.4l-2.7 3z" fill="#5e5e5e"/>
<!-- shading -->
<path d="M609.600 116.500l5-5.200 5.700 5-5.700 4.700z" fill="#fff" stroke="#666" stroke-width="1"/><path d="M612.800 113v-3.200h2.600v4.800" fill="none" stroke="#666" stroke-width="1"/><path d="M619.500 113.300c3 .8 4.200 3.800 2.600 6.700-.6-1.800-1-2.600-2.200-3.400z" fill="#3f78bd"/>
<rect x="607.600" y="121.700" width="14.800" height="2.700" fill="#fff" stroke="#808080" stroke-width="1"/>
<path d="M628.80 116.00h5.4l-2.7 3z" fill="#5e5e5e"/>
<!-- borders -->
<g stroke="#555" stroke-width="1" stroke-dasharray="1 1" fill="none"><path d="M642 110.500h13M642.500 110v11M654.500 110v11M648.500 110v11M642 116.500h13M642 120.500h13"/></g><path d="M642 122.500h13" stroke="#555" stroke-width="1.300"/>
<path d="M662.80 116.00h5.4l-2.7 3z" fill="#5e5e5e"/>
<!-- gallery scroll -->
<path d="M1705.800 81.800l2.700-2.800 2.700 2.800z" fill="#c8c8c8"/>
<path d="M1705.80 100.20h5.4l-2.7 3z" fill="#666"/>
<rect x="1705.500" y="117.200" width="6" height="1" fill="#666"/><path d="M1705.80 120.00h5.4l-2.7 3z" fill="#666"/>
<!-- search -->
<circle cx="1740.800" cy="76.600" r="3.300" fill="none" stroke="#3f78bd" stroke-width="1.500"/><path d="M1738.300 79.300l-5.500 4.200" stroke="#3f78bd" stroke-width="2" stroke-linecap="round"/>
<path d="M1798.70 77.60h5.4l-2.7 3z" fill="#666"/>
<!-- replace -->
<g font-family="Liberation Sans" font-size="9.500" font-weight="bold"><text x="1730.700" y="100.300" fill="#555">a</text><text x="1736.200" y="100.300" fill="#8b4fb3">b</text><text x="1736" y="107.500" fill="#555">a</text><text x="1741.500" y="107.500" fill="#3f78bd">c</text></g>
<path d="M1731.500 102.500v2.500h3M1733 103.500l1.700 1.600-1.700 1.600" stroke="#3f78bd" stroke-width="1" fill="none"/>
<!-- cursor -->
<path d="M1735.500 117v11.200l2.800-2.500 2 4.500 1.700-.8-2-4.400h3.800z" fill="#fff" stroke="#555" stroke-width="1" stroke-linejoin="round"/>
<path d="M1805.80 123.60h5.4l-2.7 3z" fill="#666"/>
<!-- collapse chevron -->
<path d="M1901.500 150.600l4.300-4.300 4.300 4.300" fill="none" stroke="#555" stroke-width="1.700"/>
</svg>

<!--ICONS2-->
<!-- status icons -->
<svg class="abs" style="left:0;top:1130px" width="1920" height="30" viewBox="0 1130 1920 30">
<g fill="none" stroke="#6a6a6a" stroke-width="1"><path d="M218.500 1144.500v9.500l-2-1.300h-4v-9.500h4zM218.500 1144.500l2-1.300h1.500"/><path d="M221 1146.500l4.500 4.500M225.500 1146.500l-4.500 4.500" stroke-width="1.200"/></g>
<g><rect x="1489" y="1141" width="15" height="10.300" fill="#484848"/><rect x="1491" y="1154.300" width="5.500" height="1.400" fill="#484848"/>
<circle cx="1499.800" cy="1151.800" r="4.700" fill="#f3f3f3"/><circle cx="1499.800" cy="1151.800" r="2.700" fill="none" stroke="#484848" stroke-width="2"/>
<path d="M1499.800 1147.300v9M1495.300 1151.800h9M1496.600 1148.600l6.400 6.400M1503 1148.600l-6.400 6.400" stroke="#484848" stroke-width="1.500"/><circle cx="1499.800" cy="1151.800" r="1.100" fill="#f3f3f3"/></g>
<g fill="none" stroke="#6a6a6a" stroke-width="1"><path d="M1649.500 1143.800c-1.800-1.200-3.800-1.300-6-1.300v11c2.200 0 4.200.100 6 1.300 1.800-1.200 3.800-1.300 6-1.300v-11c-2.200 0-4.200.100-6 1.300zM1649.500 1143.800v12"/><path d="M1644.800 1145.500h3.200M1644.800 1147.500h3.200M1644.800 1149.500h3.200M1644.800 1151.500h3.200M1651 1145.500h3.200M1651 1147.500h3.200M1651 1149.500h3.200M1651 1151.500h3.200" stroke-width=".8"/></g>
<g fill="none" stroke="#555" stroke-width="1"><rect x="1681.500" y="1142.500" width="13" height="12"/><path d="M1683 1145.500h10M1683 1147.500h10M1683 1149.500h10M1683 1151.500h10" stroke-width="1"/></g>
<g fill="none" stroke="#6a6a6a" stroke-width="1"><path d="M1726 1153.500h-6.500v-11h11.500v5"/><path d="M1721.500 1145.500h7.500M1721.500 1147.500h5M1721.500 1149.500h3.500" stroke-width=".9"/><circle cx="1729" cy="1151.300" r="3.600" fill="#f3f3f3" stroke-width="1.100"/><path d="M1726.500 1149.500c1.500 1 1.500 2 3 2s1-2 2.500-2.300" stroke-width=".9"/></g>
<rect x="1749.800" y="1148.200" width="6.400" height="1.600" fill="#555"/>
<rect x="1760" y="1148.800" width="100" height="1" fill="#8a8a8a"/>
<rect x="1810" y="1143" width="5.200" height="11.200" fill="#666"/>
<path d="M1863.300 1149h7.200M1866.900 1145.400v7.200" stroke="#555" stroke-width="1.600"/>
</svg>
<!-- anchor -->
<svg class="abs" style="left:556px;top:528px" width="18" height="20" viewBox="556 528 18 20"><g fill="none" stroke="#3f6db0" stroke-width="1.400"><circle cx="564.400" cy="532.200" r="1.700"/><path d="M564.400 534v9.600M561.600 536.600h5.600M558.700 539.300c.300 3 2.600 4.400 5.700 4.400s5.400-1.400 5.700-4.400"/><path d="M557.600 540.600l1.100-1.800 1.600 1.400M571.200 540.600l-1.100-1.800-1.600 1.400" stroke-width="1.100"/></g></svg>
<!-- rotate handle -->
<svg class="abs" style="left:950px;top:530px" width="36" height="50" viewBox="950 530 36 50">
<path d="M965.500 555.500v19" stroke="#8c8c8c" stroke-width="1.200"/>
<path d="M972.300 552 A9.600 9.600 0 1 1 975 545.500 h4.800 l-6.600 6.500 -6.200-6.500 h4.300 A5.500 5.500 0 1 0 969.700 549.300 z" fill="#fff" stroke="#8a8a8a" stroke-width="1.700" stroke-linejoin="round"/>
</svg>
<!-- handles -->
<div class="hd" style="left:568.500px;top:574px"></div><div class="hd" style="left:960.300px;top:574.500px"></div><div class="hd" style="left:1351.300px;top:572.500px"></div>
<div class="hd" style="left:568.500px;top:633.700px"></div><div class="hd" style="left:1351.300px;top:633.700px"></div>
<div class="hd" style="left:568.500px;top:693px"></div><div class="hd" style="left:960.300px;top:693px"></div><div class="hd" style="left:1351.300px;top:693px"></div>
<!-- red boxes -->
<div class="b" style="left:567px;top:576px;width:805px;height:126px;border:5px solid #ed1c24;box-shadow:-1px 1px 3px rgba(0,0,0,.32)"></div>
<div class="b" style="left:225px;top:1119px;width:164px;height:44px;border:5px solid #ed1c24"></div>
<!-- layout options -->
<div class="b" style="left:1372px;top:579px;width:26px;height:28px;background:#fff;border:1px solid #c9c9c9"></div>
<svg class="abs" style="left:1372px;top:579px" width="26" height="28" viewBox="1372 579 26 28"><path d="M1374.500 584.300h19.500M1374.500 587.400h19.500M1374.500 599.800h19.500M1374.500 602.900h19.500M1374.500 590.600h3M1374.500 593.700h2.500M1374.500 596.700h2.500M1391 590.600h3M1391.500 593.700h2.500M1391.500 596.700h2.500" stroke="#4a7fc1" stroke-width="1"/><path d="M1380.200 597.500v-1.300a4 4 0 0 1 8 0v1.300" fill="none" stroke="#7a7a7a" stroke-width="2"/></svg>
<!-- bookmark flyout -->
<svg class="abs" style="left:1845px;top:650px" width="64" height="60" viewBox="1845 650 64 60">
<path d="M1853.500 658.500h40v11.400l9 8.600-9 8.800v11.200h-40z" fill="#fff" stroke="#2b579a" stroke-width="1.200" style="filter:drop-shadow(0 1px 2px rgba(0,0,0,.25))"/>
<path d="M1868 670h10v16l-5-5.800-5 5.800z" fill="#4a7cb5"/>
</svg>

</body></html>
